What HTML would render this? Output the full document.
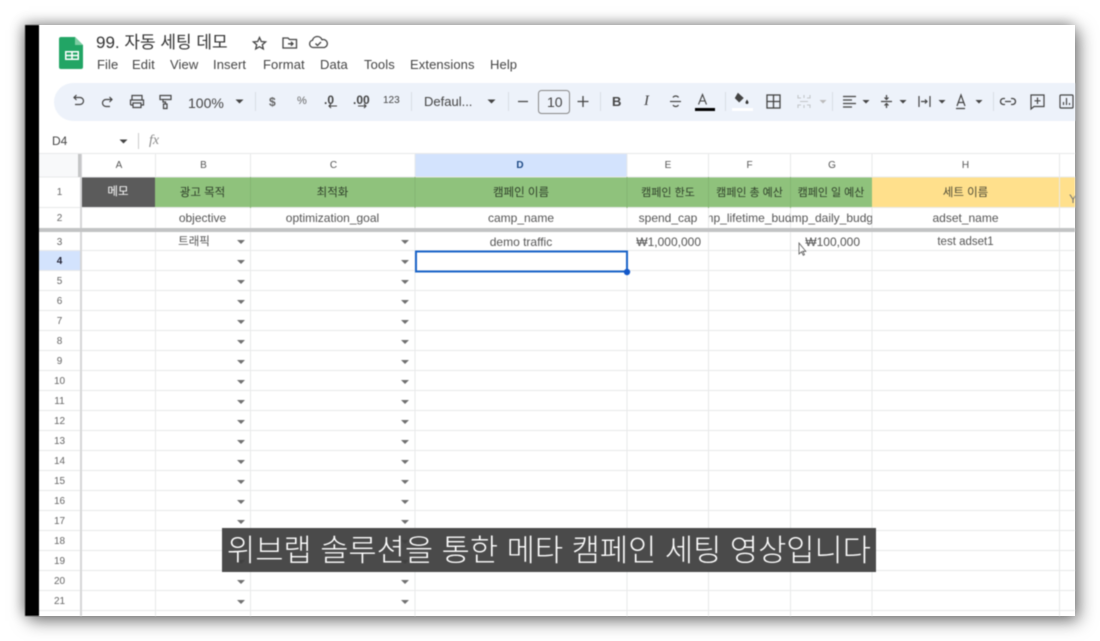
<!DOCTYPE html>
<html lang="ko"><head><meta charset="utf-8"><title>99. 자동 세팅 데모</title>
<style>
html,body{margin:0;padding:0;width:1100px;height:641px;overflow:hidden;background:#fff}
body{font-family:"Liberation Sans","Noto Sans CJK KR",sans-serif;position:relative}
#f{position:absolute;left:25px;top:25px;width:1050px;height:591px;background:#fff;box-shadow:4px 5px 16px rgba(0,0,0,.5),-3px -2px 12px rgba(0,0,0,.3)}
#a{position:absolute;left:0;top:0;width:1100px;height:641px;overflow:hidden;filter:blur(.5px)}
#c{position:absolute;left:25px;top:25px;width:1050px;height:591px;overflow:hidden}
#i{position:absolute;left:-25px;top:-25px;width:1100px;height:641px}
.t{position:absolute;white-space:nowrap;color:#444;line-height:1}
.m{font-size:13px;top:58px;color:#444;letter-spacing:.1px}
.b{font-size:13px;color:#444}
.k{position:absolute;height:20px;line-height:20px;text-align:center;white-space:nowrap;overflow:hidden;font-size:11px;color:#555}
.h{top:155px;height:22px;line-height:22px;font-size:10px;color:#555}
.r{left:39px;width:41px;font-size:10px;color:#666;margin-top:2px}
.g{top:178px;height:31px;line-height:30px;font-size:11.500px;color:#2f3f2a}
.d{top:208px;color:#555;font-size:12px}
.c{display:flex;justify-content:center}
.e{top:233px;height:19px;line-height:19px;color:#555;font-size:12px}
#s{position:absolute;left:222px;top:528px;width:654px;height:44px;line-height:46px;background:rgba(60,60,60,.93);color:#fff;font-size:30.700px;text-align:center;white-space:nowrap;overflow:hidden;font-weight:300}
</style></head><body>
<div id="f"></div>
<div id="a"><div id="c"><div id="i">
<svg width="1100" height="641" style="position:absolute;left:0;top:0">
<rect x="25" y="25" width="14" height="591" fill="#000"/>
<rect x="54" y="83" width="1040" height="38" rx="19" fill="#edf2fa"/>
<!-- logo -->
<path d="M61 37h14l8 8v22a2 2 0 0 1-2 2H61a2 2 0 0 1-2-2V39a2 2 0 0 1 2-2z" fill="#22a565"/>
<path d="M75 37l8 8h-8z" fill="#7fcda4"/>
<path d="M65 51h14v9H65zM66.500 52.500v2.300h4.700v-2.300zM72.800 52.500v2.300h4.700v-2.300zM66.500 56.200v2.300h4.700v-2.300zM72.800 56.200v2.300h4.700v-2.300z" fill="#fff" fill-rule="evenodd"/>
<!-- title icons -->
<g fill="none" stroke="#444" stroke-width="1.300">
<path d="M259.500 37.500l1.800 4 4.300.4-3.300 2.800 1 4.200-3.800-2.200-3.800 2.200 1-4.200-3.300-2.800 4.300-.4z"/>
<path d="M283 38h5l1.500 1.500h7v8.500h-13.500z"/>
<path d="M288 43.800h5M291 41.800l2 2-2 2"/>
<path d="M316 47.500h-3a3.700 3.700 0 0 1-.5-7.300 5 5 0 0 1 9.500-.5 4 4 0 0 1 2.500 7.800z"/>
<path d="M315.500 43.500l2 2 3.500-3.500"/>
</g>
<!-- toolbar icons -->
<g fill="none" stroke="#444" stroke-width="1.200">
<path d="M74 97.500h6a3.500 3.500 0 0 1 0 7h-5M76.500 95l-2.500 2.500 2.500 2.500"/>
<path d="M112 99.500h-6a3.500 3.500 0 0 0 0 7h4M109.500 97l2.500 2.500-2.500 2.500"/>
<path d="M132 100v-4.500h10v4.500M130.500 105v-5h13v5h-2.500M133 105h-2.500M133 103h8v4.500h-8z"/>
<path d="M160 95.500h11v4h-11zM163 99.500v2.500h2.500v2M163.500 104h3.500v4.500h-3.500z"/>
<path d="M843 96.500h13M843 100h9M843 103.500h13M843 107h9" stroke-width="1.300"/>
<path d="M881 101.500h11M886.500 95v4M884.500 97.500l2 2 2-2M886.500 108v-4M884.500 105.500l2-2 2 2"/>
<path d="M919 96v11M930 96v11M921 101.500h6M925 99.500l2 2-2 2"/>
<path d="M957 106l4-11 4 11M958.500 102.500h5M956 108.500h9"/>
<path d="M1005 98.500h-1.500a3 3 0 0 0 0 6h1.500M1011 98.500h1.500a3 3 0 0 1 0 6H1011M1005 101.500h6" stroke-width="1.300"/>
<path d="M1031 95h13v11.500h-10l-3 2.500zM1037.500 97.500v6.500M1034.500 100.800h6"/>
<rect x="1060" y="95" width="13" height="13" rx="1"/>
<path d="M1063.500 105v-3M1066.500 105v-7M1069.500 105v-2"/>
<rect x="767" y="95" width="13" height="13" stroke-width="1.300"/><path d="M773.500 95v13M767 101.500h13" stroke-width="1.300"/>
<path d="M670 101.500h11" /><path d="M678.500 97.500a3 2.500 0 0 0-5.500 0M673 105a3 2.500 0 0 0 5.500 0"/>
<path d="M518 101.500h10M577.500 101.500h11M583 96v11" stroke-width="1.300"/>
<path d="M698.500 104.500l4-10 4 10M699.800 101h5.500" stroke-width="1.100"/>
<path d="M738 93.500l5 4.500-3.800 3.800-3.800-3.800z" fill="#444" stroke-width="1"/>
</g>
<g fill="none" stroke="#c3c6c9" stroke-width="1.100"><path d="M798 95v3h3M810 95v3h-3M798 108v-3h3M810 108v-3h-3M804 95v3M804 105v3M800 101.500h8"/></g>
<path d="M695 108h20v3h-20z" fill="#000"/><rect x="732" y="108" width="21" height="3" fill="#fff"/>
<path d="M747 99.500l1.300 2.200a1.500 1.500 0 1 1-2.600 0z" fill="#333"/>
<rect x="538.500" y="90.500" width="31" height="23" rx="3" fill="none" stroke="#888"/>
<g stroke="#d8dde4"><path d="M255.500 92v19M411.500 92v19M508.500 92v19M600.500 92v19M725.500 92v19M832.500 92v19M993.500 92v19"/></g>
<g fill="#444"><path d="M235.500 99.500h8l-4 4zM487.500 99.500h8l-4 4zM862.500 100h7l-3.500 3.500zM899.500 100h7l-3.500 3.500zM938.500 100h7l-3.500 3.500zM975.500 100h7l-3.500 3.500zM119.500 139.500h8l-4 4z"/></g>
<path d="M819.500 100h7l-3.500 3.500z" fill="#bbb"/>
<path d="M329 106h8M331 104l-2 2 2 2M358 106h8M364 104l2 2-2 2" stroke="#444" fill="none" stroke-width="1.100"/>
<path d="M138.500 133v16" stroke="#ccc"/>
<!-- grid fills -->
<rect x="415" y="154" width="212" height="23" fill="#d3e3fd"/>
<rect x="39" y="251" width="41" height="20" fill="#d3e3fd"/>
<rect x="39" y="154" width="41" height="23" fill="#f8f9fa"/>
<rect x="81" y="177" width="74" height="31" fill="#5b5b5b"/>
<rect x="155" y="177" width="717" height="31" fill="#8fc27c"/>
<rect x="872" y="177" width="203" height="31" fill="#ffe08c"/>
<!-- grid lines -->
<g stroke="#e8e9ea" fill="none">
<path d="M39 153.500h1036M39 177h1036M39 207.500h1036M39 250.500h1036M39 270.500h1036M39 290.500h1036M39 310.500h1036M39 330.500h1036M39 350.500h1036M39 370.500h1036M39 390.500h1036M39 410.500h1036M39 430.500h1036M39 450.500h1036M39 470.500h1036M39 490.500h1036M39 510.500h1036M39 530.500h1036M39 550.500h1036M39 570.500h1036M39 590.500h1036M39 610.500h1036"/>
<path d="M155.500 154v23M155.500 208v408M250.500 154v23M250.500 208v408M415 154v23M415 208v408M627 154v23M627 208v408M708.500 154v23M708.500 208v408M790.500 154v23M790.500 208v408M872 154v23M872 208v408M1059.500 154v462"/>
</g>
<g stroke="#84b572" fill="none"><path d="M250.500 177v31M415 177v31M627 177v31M708.500 177v31M790.500 177v31"/></g>
<path d="M81 154v462" stroke="#d5d6d7" stroke-width="2"/>
<rect x="78" y="154" width="3" height="23" fill="#c4c5c6"/>
<rect x="39" y="228" width="1036" height="4" fill="#c2c3c4"/>
<rect x="416" y="251.500" width="211" height="20" fill="none" stroke="#1a64c8" stroke-width="2"/>
<circle cx="627" cy="272" r="3.200" fill="#1358c9"/>
<path d="M799 243v11l2.500-2.200 1.800 3.500 1.200-.7-1.700-3.300h3z" fill="#fff" stroke="#555" stroke-width=".8"/>
<!-- dropdowns -->
<path fill="#707070" d="M237 240h8l-4 4zM401 240h8l-4 4zM237 260h8l-4 4zM401 260h8l-4 4zM237 280h8l-4 4zM401 280h8l-4 4zM237 300h8l-4 4zM401 300h8l-4 4zM237 320h8l-4 4zM401 320h8l-4 4zM237 340h8l-4 4zM401 340h8l-4 4zM237 360h8l-4 4zM401 360h8l-4 4zM237 380h8l-4 4zM401 380h8l-4 4zM237 400h8l-4 4zM401 400h8l-4 4zM237 420h8l-4 4zM401 420h8l-4 4zM237 440h8l-4 4zM401 440h8l-4 4zM237 460h8l-4 4zM401 460h8l-4 4zM237 480h8l-4 4zM401 480h8l-4 4zM237 500h8l-4 4zM401 500h8l-4 4zM237 520h8l-4 4zM401 520h8l-4 4zM237 540h8l-4 4zM401 540h8l-4 4zM237 560h8l-4 4zM401 560h8l-4 4zM237 580h8l-4 4zM401 580h8l-4 4zM237 600h8l-4 4zM401 600h8l-4 4z"/>
</svg>
<div class="t" style="left:96px;top:34px;font-size:17px;color:#333;line-height:18px">99. 자동 세팅 데모</div>
<div class="t m" style="left:97px">File</div><div class="t m" style="left:132px">Edit</div><div class="t m" style="left:170px">View</div><div class="t m" style="left:213px">Insert</div><div class="t m" style="left:263px">Format</div><div class="t m" style="left:320px">Data</div><div class="t m" style="left:364px">Tools</div><div class="t m" style="left:410px">Extensions</div><div class="t m" style="left:490px">Help</div>
<div class="t" style="left:188px;top:96px;font-size:14px">100%</div>
<div class="t" style="left:269px;top:96px;font-size:12px;font-weight:700;color:#666">$</div>
<div class="t" style="left:297px;top:96px;font-size:11px;color:#666">%</div>
<div class="t" style="left:324px;top:94px;font-size:12px;font-weight:700">.0</div>
<div class="t" style="left:353px;top:94px;font-size:12px;font-weight:700">.00</div>
<div class="t" style="left:383px;top:96px;font-size:10px">123</div>
<div class="t b" style="left:424px;top:95px">Defaul...</div>
<div class="t b" style="left:547px;top:95px;font-size:14px">10</div>
<div class="t" style="left:612px;top:95px;font-size:13px;font-weight:700">B</div>
<div class="t" style="left:644px;top:94px;font-size:15px;font-style:italic;font-family:'Liberation Serif',serif">I</div>
<div class="t" style="left:52px;top:135px;font-size:12px">D4</div>
<div class="t" style="left:149px;top:134px;font-size:14px;font-style:italic;font-family:'Liberation Serif',serif;color:#888">fx</div>
<div class="k h" style="left:82px;width:74px">A</div><div class="k h" style="left:156px;width:95px">B</div><div class="k h" style="left:251px;width:165px">C</div><div class="k h" style="left:414px;width:212px;font-weight:700;color:#1d4a86">D</div><div class="k h" style="left:627px;width:82px">E</div><div class="k h" style="left:709px;width:81px">F</div><div class="k h" style="left:791px;width:82px">G</div><div class="k h" style="left:872px;width:187px">H</div>
<div class="k r" style="top:181px">1</div><div class="k r" style="top:207px">2</div><div class="k r" style="top:231px">3</div><div class="k r" style="top:250px;font-weight:700;color:#223">4</div><div class="k r" style="top:270px">5</div><div class="k r" style="top:290px">6</div><div class="k r" style="top:310px">7</div><div class="k r" style="top:330px">8</div><div class="k r" style="top:350px">9</div><div class="k r" style="top:370px">10</div><div class="k r" style="top:390px">11</div><div class="k r" style="top:410px">12</div><div class="k r" style="top:430px">13</div><div class="k r" style="top:450px">14</div><div class="k r" style="top:470px">15</div><div class="k r" style="top:490px">16</div><div class="k r" style="top:510px">17</div><div class="k r" style="top:530px">18</div><div class="k r" style="top:550px">19</div><div class="k r" style="top:570px">20</div><div class="k r" style="top:590px">21</div>
<div class="k g" style="left:81px;width:74px;color:#fff;top:177px">메모</div><div class="k g" style="left:155px;width:95px">광고 목적</div><div class="k g" style="left:250px;width:165px">최적화</div><div class="k g" style="left:415px;width:212px">캠페인 이름</div><div class="k g" style="left:627px;width:82px;font-size:11px">캠페인 한도</div><div class="k g" style="left:709px;width:81px;font-size:11px">캠페인 총 예산</div><div class="k g" style="left:790px;width:82px;font-size:11px">캠페인 일 예산</div><div class="k g" style="left:872px;width:187px;color:#4c4a36">세트 이름</div>
<div class="t" style="left:1069px;top:193px;font-size:12px;color:#777">Y</div>
<div class="k d" style="left:155px;width:95px">objective</div><div class="k d" style="left:250px;width:165px">optimization_goal</div><div class="k d" style="left:415px;width:212px">camp_name</div><div class="k d" style="left:627px;width:82px">spend_cap</div><div class="k d c" style="left:709px;width:81px"><span style="flex:none">camp_lifetime_budget</span></div><div class="k d c" style="left:790px;width:82px"><span style="flex:none">camp_daily_budget</span></div><div class="k d" style="left:872px;width:187px">adset_name</div>
<div class="k e" style="left:155px;width:78px;font-size:11.500px">트래픽</div><div class="k e" style="left:415px;width:212px">demo traffic</div><div class="k e" style="left:627px;width:74px;text-align:right">₩1,000,000</div><div class="k e" style="left:790px;width:70px;text-align:right">₩100,000</div><div class="k e" style="left:872px;width:187px;font-size:11.500px">test adset1</div>
<div id="s">위브랩 솔루션을 통한 메타 캠페인 세팅 영상입니다</div>
</div></div></div>
</body></html>
